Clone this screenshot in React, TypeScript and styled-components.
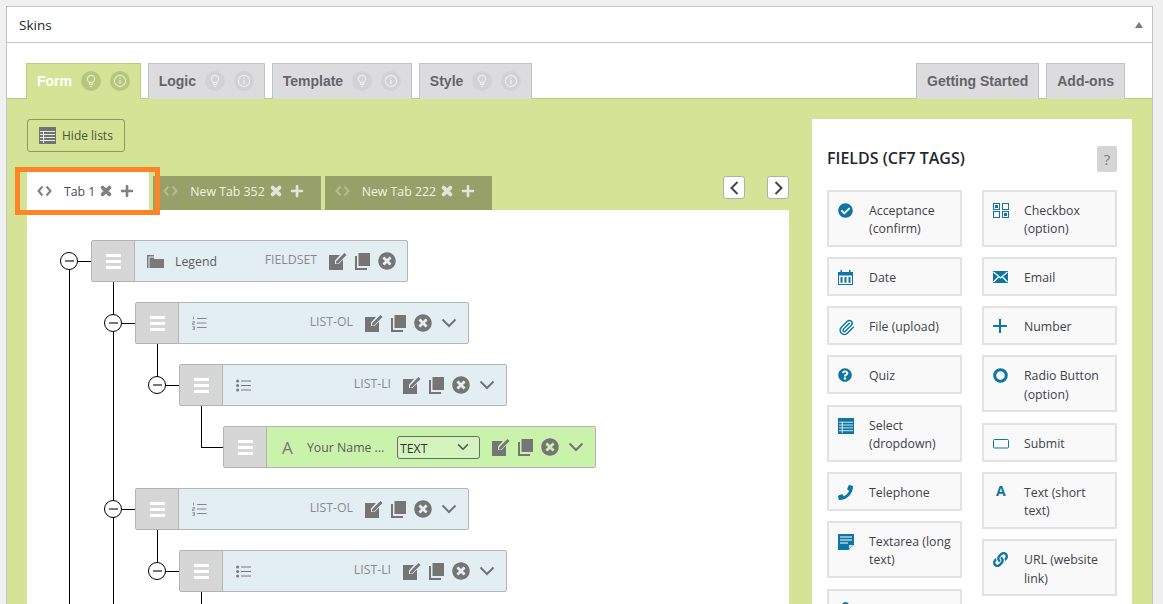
import styled, { createGlobalStyle } from "styled-components";
import { FaCheckCircle, FaLink, FaPhoneAlt, FaPlus, FaQuestionCircle, FaTimes, FaTimesCircle, FaUser } from "react-icons/fa";
import { Paperclip } from "lucide-react";
import type { ReactNode } from "react";

const GlobalStyle = createGlobalStyle`
  html, body {
    margin: 0;
    height: 100%;
    overflow: hidden;
    background: #f0f0f1;
    font-family: "Open Sans", "Liberation Sans", sans-serif;
    font-size: 12.3px;
    color: #3c434a;
  }
  * { box-sizing: border-box; }
  ul { list-style: none; margin: 0; padding: 0; }
`;

const BLUE = "#0d76a3";

/* ---------- small drawn icons ---------- */

const BulbIcon = () => (
  <svg width="12" height="14" viewBox="0 0 12 14" fill="none" stroke="currentColor">
    <circle cx="6" cy="5" r="3.6" strokeWidth="1.2" />
    <path d="M4.5 9v1.5h3V9M5 12.5h2" strokeWidth="1.2" />
  </svg>
);

const InfoIcon = () => (
  <svg width="14" height="14" viewBox="0 0 14 14" fill="none" stroke="currentColor">
    <circle cx="7" cy="7" r="5.6" strokeWidth="1.1" />
    <path d="M7 6v4M7 3.6v1.2" strokeWidth="1.4" />
  </svg>
);

const CodeIcon = () => (
  <svg width="15" height="12" viewBox="0 0 15 12" fill="none" stroke="currentColor" strokeWidth="2">
    <path d="M5.5 1.5 1.5 6l4 4.5M9.5 1.5l4 4.5-4 4.5" />
  </svg>
);

const TableIcon = ({ size = 17 }: { size?: number }) => (
  <svg width={size} height={size} viewBox="0 0 17 17">
    <rect width="17" height="17" fill="currentColor" />
    <path d="M1 4.5h15M1 7.5h15M1 10.5h15M1 13.5h15M4.5 4v12" stroke="#fff" strokeWidth="1" opacity="0.85" fill="none" />
  </svg>
);

const ChevronIcon = ({ size = 16 }: { size?: number }) => (
  <svg width={size} height="10" viewBox="0 0 16 10" fill="none" stroke="currentColor" strokeWidth="2">
    <path d="M1.5 1.5 8 8l6.5-6.5" />
  </svg>
);

const SideArrow = ({ left }: { left?: boolean }) => (
  <svg width="9" height="14" viewBox="0 0 9 14" fill="none" stroke="#444" strokeWidth="2">
    <path d={left ? "M7.5 1 1.5 7l6 6" : "M1.5 1l6 6-6 6"} />
  </svg>
);

const EditIcon = () => (
  <svg width="18" height="18" viewBox="0 0 18 18" fill="currentColor">
    <path d="M0 3h11L6 8.5V12h3.5L14 7.5V18H0z" />
    <path d="M7 9.5 15.5 1 17.5 3 9 11.5H7z" />
  </svg>
);

const CopyIcon = () => (
  <svg width="15" height="17" viewBox="0 0 15 17" fill="currentColor">
    <path d="M3.5 0H15v13H3.5z" />
    <path d="M0 3h2v12h10v2H0z" />
  </svg>
);

const FolderIcon = () => (
  <svg width="17" height="13" viewBox="0 0 17 13" fill="currentColor">
    <path d="M0 0h7v1.5h-5.5V13H0z" />
    <path d="M2.5 2.5h4l1 1.5H17v9H2.5z" />
  </svg>
);

const OrderedIcon = () => (
  <svg width="16" height="14" viewBox="-1 0 16 14" fill="none" stroke="currentColor">
    <path d="M5 2.5h9.5M5 7h9.5M5 11.5h9.5" strokeWidth="0.9" />
    <path d="M1.5 0.5v3M0.5 5.5h2v1.5h-2v1.5h2M0.5 10.5h2v3h-2M0.8 12h1.5" strokeWidth="0.7" />
  </svg>
);

const BulletIcon = () => (
  <svg width="16" height="13" viewBox="-1 0 16 13" fill="currentColor">
    <circle cx="1.6" cy="2" r="1.5" />
    <circle cx="1.6" cy="6.5" r="1.5" />
    <circle cx="1.6" cy="11" r="1.5" />
    <path d="M5 1.6h10v.9H5zM5 6h10v.9H5zM5 10.5h10v.9H5z" />
  </svg>
);

const CheckboxIcon = () => (
  <svg width="16" height="15" viewBox="0 0 16 15">
    <rect x="0.5" y="0.5" width="6" height="6" fill="#fff" stroke={BLUE} />
    <rect x="2" y="2" width="3" height="3" fill={BLUE} />
    <rect x="9.5" y="0.5" width="6" height="6" fill="#fff" stroke={BLUE} />
    <rect x="0.5" y="8.5" width="6" height="6" fill="#fff" stroke={BLUE} />
    <rect x="9.5" y="8.5" width="6" height="6" fill="#fff" stroke={BLUE} />
    <rect x="11" y="10" width="3" height="3" fill={BLUE} />
  </svg>
);

const CalendarIcon = () => (
  <svg width="15" height="15" viewBox="0 0 15 15" fill={BLUE}>
    <path d="M0 2h2.5V0h1.5v2h7V0h1.5v2H15v13H0zM1 5.5V14h13V5.5z" />
    <path d="M2.5 7h2v5.8h-2zM6.5 7h2v5.8h-2zM10.5 7h2v5.8h-2z" />
  </svg>
);

const EmailIcon = () => (
  <svg width="15" height="12" viewBox="0 0 15 12">
    <rect width="15" height="12" fill={BLUE} />
    <path d="M0.5 1 7.5 7l7-6M0.5 11l5-5M14.5 11l-5-5" stroke="#fff" strokeWidth="1.2" fill="none" />
  </svg>
);

const PlusIcon = () => (
  <svg width="14" height="14" viewBox="0 0 14 14" stroke={BLUE} strokeWidth="2">
    <path d="M0 7h14M7 0v14" />
  </svg>
);

const RingIcon = () => (
  <svg width="15" height="15" viewBox="0 0 15 15" fill="none" stroke={BLUE} strokeWidth="3">
    <circle cx="7.5" cy="7.5" r="5.8" />
  </svg>
);

const SubmitIcon = () => (
  <svg width="16" height="10" viewBox="0 0 16 10" fill="none" stroke={BLUE} strokeWidth="1">
    <rect x="0.5" y="0.5" width="15" height="8.5" rx="1" />
  </svg>
);

const NoteIcon = () => (
  <svg width="16" height="16" viewBox="0 0 16 16">
    <path d="M0 0h16v10.5L10.5 16H0z" fill={BLUE} />
    <path d="M2 3h12M2 6h12M2 9h8" stroke="#fff" strokeWidth="1.2" fill="none" />
    <path d="M11 15v-4h4z" fill="#cfe3ec" />
  </svg>
);

const PhoneIcon = styled(FaPhoneAlt)`
  transform: scaleX(-1);
`;

/* ---------- page frame ---------- */

const Page = styled.div`
  padding: 6px 10px 0 6px;
`;

const Postbox = styled.section`
  border: 1px solid #c3c4c7;
  background: #fff;
`;

const BoxHeader = styled.header`
  height: 36px;
  padding: 0 12px;
  display: flex;
  align-items: center;
  justify-content: space-between;
  border-bottom: 1px solid #c3c4c7;
  font-size: 13.5px;
  font-weight: 500;
  color: #1d2327;
`;

const CollapseArrow = styled.span`
  width: 0;
  height: 0;
  margin-right: -3px;
  border-left: 4px solid transparent;
  border-right: 4px solid transparent;
  border-bottom: 6px solid #787c82;
`;

const TopTabs = styled.nav`
  display: flex;
  justify-content: space-between;
  padding: 20px 27px 0 19px;
  height: 55px;
`;

const TopGroup = styled.div<{ $gap: number }>`
  display: flex;
  gap: ${(p) => p.$gap}px;
`;

const TopTab = styled.div<{ $active?: boolean }>`
  display: flex;
  align-items: center;
  gap: 9px;
  height: 36px;
  padding: 0 10px 2px;
  border: 1px solid ${(p) => (p.$active ? "#bccb80" : "#c3c4c7")};
  border-bottom: none;
  background: ${(p) => (p.$active ? "#d4e396" : "#dcdcde")};
  color: ${(p) => (p.$active ? "#fff" : "#646468")};
  font-family: "Liberation Sans", Arial, sans-serif;
  font-size: 14px;
  font-weight: 700;
  position: relative;
  z-index: 1;
`;

const HintDot = styled.span<{ $active?: boolean }>`
  width: 20px;
  height: 20px;
  border-radius: 50%;
  display: flex;
  align-items: center;
  justify-content: center;
  background: ${(p) => (p.$active ? "#b5c77f" : "#d2d2d4")};
  color: ${(p) => (p.$active ? "#e6eec4" : "#eeeeee")};
`;

const GreenPanel = styled.div`
  display: flex;
  gap: 23px;
  padding: 20px 20px 0;
  background: #d4e396;
  border-top: 1px solid #bccb80;
`;

const Workspace = styled.div`
  width: 762px;
  flex: none;
`;

const HideButton = styled.button`
  display: flex;
  align-items: center;
  gap: 6px;
  width: 98px;
  height: 33px;
  padding: 0 11px;
  background: transparent;
  border: 1px solid #8b9a63;
  border-radius: 3px;
  font-family: inherit;
  font-size: 12px;
  color: #47563f;
  svg {
    color: #74746f;
    flex: none;
  }
`;

/* ---------- form tabs ---------- */

const TabStrip = styled.div`
  position: relative;
  display: flex;
  align-items: flex-end;
  gap: 4px;
  height: 38px;
  margin-top: 20px;
`;

const FormTab = styled.div<{ $active?: boolean }>`
  display: flex;
  align-items: center;
  height: ${(p) => (p.$active ? "38px" : "34px")};
  padding: 0 ${(p) => (p.$active ? "15px" : "17px")} ${(p) => (p.$active ? "0" : "4px")} 10px;
  background: ${(p) => (p.$active ? "#fff" : "#97a069")};
  color: ${(p) => (p.$active ? "#4a4560" : "#f1f3e4")};
`;

const TabCode = styled.span<{ $active?: boolean }>`
  display: flex;
  margin-right: 12px;
  color: ${(p) => (p.$active ? "#7f7f84" : "#b6bd8a")};
`;

const TabTools = styled.span<{ $active?: boolean }>`
  display: flex;
  align-items: center;
  gap: 7px;
  margin-left: 4px;
  color: ${(p) => (p.$active ? "#808084" : "#e3e4da")};
`;

const CloseGlyph = styled(FaTimes)`
  stroke: currentColor;
  stroke-width: 40;
`;

const TabHighlight = styled.div`
  position: absolute;
  left: -12px;
  top: -5px;
  width: 145px;
  height: 48px;
  border: 5px solid #ff8327;
  pointer-events: none;
`;

const TabNav = styled.div`
  display: flex;
  gap: 22px;
  margin-left: auto;
  align-self: flex-start;
  margin-top: 4px;
`;

const NavButton = styled.button`
  width: 22px;
  height: 23px;
  padding: 0;
  display: flex;
  align-items: center;
  justify-content: center;
  background: #fff;
  border: 1px solid #b0b0b0;
  border-radius: 3px;
`;

/* ---------- tree ---------- */

const Canvas = styled.div`
  background: #fff;
  padding: 30px 0 40px 64px;
  height: 900px;
`;

const NodeList = styled.ul<{ $nested?: boolean }>`
  display: flex;
  flex-direction: column;
  gap: 20px;
  margin-left: ${(p) => (p.$nested ? "44px" : "0")};
  margin-top: ${(p) => (p.$nested ? "20px" : "0")};
`;

const NodeItem = styled.li<{ $first?: boolean; $last?: boolean }>`
  position: relative;
  &::before {
    content: "";
    position: absolute;
    left: -22px;
    width: 1px;
    background: #000;
    top: ${(p) => (p.$first ? "21px" : "-20px")};
    ${(p) => (p.$last ? "height: 41px;" : "bottom: 0;")}
  }
`;

const Row = styled.div<{ $width: number; $leaf?: boolean }>`
  position: relative;
  display: flex;
  width: ${(p) => p.$width}px;
  height: 42px;
  border: 1px solid #b4b4b4;
  border-radius: 2px;
  background: ${(p) => (p.$leaf ? "#c9f3ab" : "#e3eef3")};
  color: #6f6f6f;
  &::before {
    content: "";
    position: absolute;
    left: -23px;
    top: 20px;
    width: 22px;
    height: 1px;
    background: #000;
  }
`;

const Toggle = styled.span`
  position: absolute;
  left: -32px;
  top: 11px;
  width: 18px;
  height: 18px;
  border: 1px solid #000;
  border-radius: 50%;
  background: #fff;
  z-index: 1;
  display: flex;
  align-items: center;
  justify-content: center;
  &::after {
    content: "";
    width: 9px;
    height: 2px;
    background: #777;
  }
`;

const Handle = styled.div`
  flex: none;
  width: 43px;
  display: flex;
  flex-direction: column;
  align-items: center;
  justify-content: center;
  gap: 3px;
  background: #d6d6d6;
  border-right: 1px solid #b4b4b4;
`;

const HandleBar = styled.span`
  width: 15px;
  height: 3px;
  background: #fff;
`;

const RowBody = styled.div<{ $leaf?: boolean }>`
  flex: 1;
  display: flex;
  align-items: center;
  padding: 0 11px 0 ${(p) => (p.$leaf ? "15px" : "12px")};
`;

const TypeSlot = styled.span<{ $leaf?: boolean }>`
  flex: none;
  width: ${(p) => (p.$leaf ? "25px" : "28px")};
  display: flex;
  align-items: center;
  color: #7a7a7a;
`;

const LetterGlyph = styled.span`
  font-size: 17px;
  font-weight: 500;
  color: #777;
`;

const RowLabel = styled.span`
  color: #5c5c5c;
  white-space: nowrap;
  margin-top: 1px;
`;

const TypeName = styled.span`
  margin-left: auto;
  margin-right: 12px;
  margin-top: -3px;
  color: #8a8a8a;
  white-space: nowrap;
`;

const TypeSelect = styled.div`
  width: 83px;
  height: 23px;
  margin-left: auto;
  margin-right: 12px;
  padding: 2px 10px 0 2px;
  display: flex;
  align-items: center;
  justify-content: space-between;
  border: 1px solid #6b6b6b;
  border-radius: 3px;
  background: #d3f5bd;
  color: #333;
  svg {
    color: #555;
    margin-top: -2px;
  }
`;

const Actions = styled.div`
  display: flex;
  align-items: center;
  gap: 8px;
  color: #757575;
`;

const RowChevron = styled.span`
  display: flex;
  margin-left: 1px;
  color: #757575;
`;

type NodeData = {
  kind: "fieldset" | "ol" | "li" | "text";
  children?: NodeData[];
};

const NODE_INFO = {
  fieldset: { width: 317, icon: <FolderIcon />, label: "Legend", type: "FIELDSET" },
  ol: { width: 334, icon: <OrderedIcon />, label: "", type: "LIST-OL" },
  li: { width: 328, icon: <BulletIcon />, label: "", type: "LIST-LI" },
  text: { width: 373, icon: <LetterGlyph>A</LetterGlyph>, label: "Your Name ...", type: "TEXT" },
};

const listGroup: NodeData = {
  kind: "ol",
  children: [{ kind: "li", children: [{ kind: "text" }] }],
};

const tree: NodeData[] = [
  { kind: "fieldset", children: [listGroup, listGroup, listGroup] },
  { kind: "fieldset", children: [] },
];

function TreeNode({ node, first, last }: { node: NodeData; first?: boolean; last?: boolean }) {
  const info = NODE_INFO[node.kind];
  const leaf = node.kind === "text";
  return (
    <NodeItem $first={first} $last={last}>
      <Row $width={info.width} $leaf={leaf}>
        {!leaf && <Toggle />}
        <Handle>
          <HandleBar />
          <HandleBar />
          <HandleBar />
        </Handle>
        <RowBody $leaf={leaf}>
          <TypeSlot $leaf={leaf}>{info.icon}</TypeSlot>
          {info.label && <RowLabel>{info.label}</RowLabel>}
          {leaf ? (
            <TypeSelect>
              {info.type}
              <ChevronIcon size={12} />
            </TypeSelect>
          ) : (
            <TypeName>{info.type}</TypeName>
          )}
          <Actions>
            <EditIcon />
            <CopyIcon />
            <FaTimesCircle size={18} />
            {node.kind !== "fieldset" && (
              <RowChevron>
                <ChevronIcon />
              </RowChevron>
            )}
          </Actions>
        </RowBody>
      </Row>
      {node.children && node.children.length > 0 && (
        <NodeList $nested>
          {node.children.map((child, i) => (
            <TreeNode key={i} node={child} last={i === node.children!.length - 1} />
          ))}
        </NodeList>
      )}
    </NodeItem>
  );
}

/* ---------- fields sidebar ---------- */

const Sidebar = styled.aside`
  width: 320px;
  flex: none;
  background: #fff;
  padding: 27px 15px 20px;
`;

const SideHeader = styled.div`
  display: flex;
  justify-content: space-between;
  align-items: center;
  margin-bottom: 17.6px;
`;

const SideTitle = styled.h3`
  margin: -2px 0 0;
  font-size: 16px;
  font-weight: 600;
  color: #23282d;
`;

const HelpButton = styled.span`
  width: 20px;
  height: 26px;
  display: flex;
  align-items: center;
  justify-content: center;
  background: #d5d5d5;
  border-radius: 2px;
  font-size: 15px;
  color: #808080;
`;

const FieldColumns = styled.div`
  display: grid;
  grid-template-columns: 135px 135px;
  gap: 20px;
`;

const FieldColumn = styled.div`
  display: flex;
  flex-direction: column;
  gap: 10.5px;
`;

const FieldItem = styled.div`
  display: flex;
  padding: 10px 8px 6.5px;
  border: 2px solid #e2e2e2;
  background: #f9f9f9;
  line-height: 18.2px;
  color: #3c434a;
`;

const FieldIcon = styled.span`
  flex: none;
  width: 32px;
  height: 18px;
  padding: 1px 0 0 1px;
  color: ${BLUE};
`;

const TextGlyph = styled.span`
  display: block;
  margin: -3px 0 0 3px;
  font-size: 14px;
  font-weight: 700;
  color: ${BLUE};
`;

type FieldData = { label: string; icon: ReactNode };

const leftFields: FieldData[] = [
  { label: "Acceptance (confirm)", icon: <FaCheckCircle size={15} /> },
  { label: "Date", icon: <CalendarIcon /> },
  { label: "File (upload)", icon: <Paperclip size={17} strokeWidth={2} /> },
  { label: "Quiz", icon: <FaQuestionCircle size={14} /> },
  { label: "Select (dropdown)", icon: <TableIcon size={16} /> },
  { label: "Telephone", icon: <PhoneIcon size={15} /> },
  { label: "Textarea (long text)", icon: <NoteIcon /> },
  { label: "Recaptcha", icon: <FaUser size={15} /> },
];

const rightFields: FieldData[] = [
  { label: "Checkbox (option)", icon: <CheckboxIcon /> },
  { label: "Email", icon: <EmailIcon /> },
  { label: "Number", icon: <PlusIcon /> },
  { label: "Radio Button (option)", icon: <RingIcon /> },
  { label: "Submit", icon: <SubmitIcon /> },
  { label: "Text (short text)", icon: <TextGlyph>A</TextGlyph> },
  { label: "URL (website link)", icon: <FaLink size={15} /> },
];

const topTabs = ["Form", "Logic", "Template", "Style"];
const formTabs = ["Tab 1", "New Tab 352", "New Tab 222"];

export default function App() {
  return (
    <Page>
      <GlobalStyle />
      <Postbox>
        <BoxHeader>
          Skins
          <CollapseArrow />
        </BoxHeader>
        <TopTabs>
          <TopGroup $gap={6.7}>
            {topTabs.map((name, i) => (
              <TopTab key={name} $active={i === 0}>
                {name}
                <HintDot $active={i === 0}>
                  <BulbIcon />
                </HintDot>
                <HintDot $active={i === 0}>
                  <InfoIcon />
                </HintDot>
              </TopTab>
            ))}
          </TopGroup>
          <TopGroup $gap={7}>
            <TopTab>Getting Started</TopTab>
            <TopTab>Add-ons</TopTab>
          </TopGroup>
        </TopTabs>
        <GreenPanel>
          <Workspace>
            <HideButton>
              <TableIcon />
              Hide lists
            </HideButton>
            <TabStrip>
              {formTabs.map((name, i) => (
                <FormTab key={name} $active={i === 0}>
                  <TabCode $active={i === 0}>
                    <CodeIcon />
                  </TabCode>
                  {name}
                  <TabTools $active={i === 0}>
                    <CloseGlyph size={14} />
                    <FaPlus size={14} />
                  </TabTools>
                </FormTab>
              ))}
              <TabNav>
                <NavButton>
                  <SideArrow left />
                </NavButton>
                <NavButton>
                  <SideArrow />
                </NavButton>
              </TabNav>
              <TabHighlight />
            </TabStrip>
            <Canvas>
              <NodeList>
                {tree.map((node, i) => (
                  <TreeNode key={i} node={node} first={i === 0} last={i === tree.length - 1} />
                ))}
              </NodeList>
            </Canvas>
          </Workspace>
          <Sidebar>
            <SideHeader>
              <SideTitle>FIELDS (CF7 TAGS)</SideTitle>
              <HelpButton>?</HelpButton>
            </SideHeader>
            <FieldColumns>
              {[leftFields, rightFields].map((column, c) => (
                <FieldColumn key={c}>
                  {column.map((field) => (
                    <FieldItem key={field.label}>
                      <FieldIcon>{field.icon}</FieldIcon>
                      <span>{field.label}</span>
                    </FieldItem>
                  ))}
                </FieldColumn>
              ))}
            </FieldColumns>
          </Sidebar>
        </GreenPanel>
      </Postbox>
    </Page>
  );
}
